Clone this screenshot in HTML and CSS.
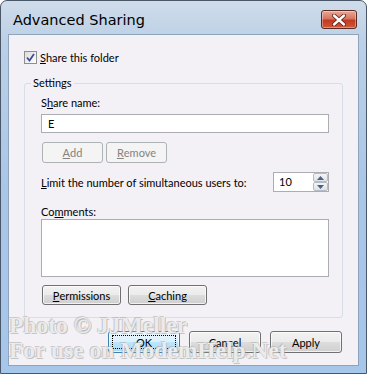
FILE: index.html
```html
<!DOCTYPE html>
<html>
<head>
<meta charset="utf-8">
<link rel="stylesheet" href="styles.css">
</head>
<body>
<div class="window">
  <div class="titlebar">
    <span class="title">Advanced Sharing</span>
    <div class="close">
      <svg width="16" height="12" viewBox="0 0 16 12"><path d="M3 1.5 L13 10.5 M13 1.5 L3 10.5" stroke="#5a1a10" stroke-width="4" stroke-linecap="round"/><path d="M3 1.5 L13 10.5 M13 1.5 L3 10.5" stroke="#ffffff" stroke-width="2.4" stroke-linecap="round"/></svg>
    </div>
  </div>
  <div class="client">
    <label class="check-row">
      <span class="checkbox">
        <svg width="9" height="9" viewBox="0 0 9 9"><path d="M1 4.5 L3.5 7.5 L8 1" fill="none" stroke="#3c4e9a" stroke-width="1.8"/></svg>
      </span>
      <span><u>S</u>hare this folder</span>
    </label>
    <fieldset class="group">
      <legend>Settings</legend>
      <div class="label"><span>S<u>h</u>are name:</span></div>
      <div class="input">E</div>
      <div class="btn-row">
        <div class="btn disabled small"><u>A</u>dd</div>
        <div class="btn disabled small"><u>R</u>emove</div>
      </div>
      <div class="limit-row">
        <span><u>L</u>imit the number of simultaneous users to:</span>
        <div class="spinner">
          <span class="spin-val">10</span>
          <div class="spin-btns">
            <div class="spin-btn"><svg width="7" height="4" viewBox="0 0 7 4"><path d="M0 4 L3.5 0 L7 4Z" fill="#4d6185"/></svg></div>
            <div class="spin-btn"><svg width="7" height="4" viewBox="0 0 7 4"><path d="M0 0 L3.5 4 L7 0Z" fill="#4d6185"/></svg></div>
          </div>
        </div>
      </div>
      <div class="label comments-label">Co<u>m</u>ments:</div>
      <div class="textarea"></div>
      <div class="btn-row bottom-row">
        <div class="btn wide"><u>P</u>ermissions</div>
        <div class="btn wide"><u>C</u>aching</div>
      </div>
    </fieldset>
    <div class="footer">
      <div class="btn dlg default"><span class="focus">OK</span></div>
      <div class="btn dlg">Cancel</div>
      <div class="btn dlg">Apply</div>
    </div>
  </div>
  <div class="watermark">
    <div>Photo © JJMeller</div>
    <div>For use on ModemHelp.Net</div>
  </div>
</div>
</body>
</html>
```
FILE: styles.css
```css
html, body {
  margin: 0;
  padding: 0;
  background: #ffffff;
}
body {
  width: 367px;
  height: 374px;
  overflow: hidden;
  font-family: Lato, "Liberation Sans", Arial, sans-serif;
  font-size: 11px;
  color: #000;
}
.window {
  position: relative;
  box-sizing: border-box;
  width: 367px;
  height: 374px;
  border: 1px solid #4a5768;
  border-radius: 7px 7px 0 0;
  background: linear-gradient(to bottom, #cfdcea 0px, #bcd0e6 40px, #a9c6e6 200px, #a6c6ea 374px);
  padding: 0 7px 7px 7px;
  display: flex;
  flex-direction: column;
}
.titlebar {
  height: 33px;
  display: flex;
  align-items: flex-start;
  justify-content: space-between;
}
.title {
  font-family: "DejaVu Sans", sans-serif;
  font-size: 14.5px;
  margin-top: 11px;
  margin-left: 5px;
  color: #000;
}
.close {
  margin-top: 9px;
  margin-right: 2px;
  width: 36px;
  height: 19px;
  box-sizing: border-box;
  border: 1px solid #5b2a22;
  border-radius: 3px;
  background: linear-gradient(to bottom, #e9a99a 0%, #d7745f 45%, #c23a1f 55%, #cf5a3a 100%);
  display: flex;
  align-items: center;
  justify-content: center;
  box-shadow: inset 0 0 0 1px rgba(255,255,255,0.35);
}
.client {
  flex: 1;
  background: #f3f1f5;
  border: 1px solid #8ea4bd;
  display: flex;
  flex-direction: column;
}
.check-row {
  display: flex;
  align-items: center;
  gap: 3px;
  margin: 15px 0 0 15px;
  height: 14px;
}
.checkbox {
  width: 13px;
  height: 13px;
  box-sizing: border-box;
  border: 1px solid #8e8f8f;
  background: linear-gradient(135deg, #dcdcdc, #ffffff);
  display: flex;
  align-items: center;
  justify-content: center;
}
.group {
  margin: 12px 0 0 15px;
  width: 319px;
  height: 242px;
  box-sizing: border-box;
  border: 1px solid #d5dfe5;
  border-radius: 3px;
  padding: 0 0 0 16px;
  display: flex;
  flex-direction: column;
}
.group legend {
  padding: 0 2px;
  margin-left: -10px;
  line-height: 14px;
}
.label {
  margin-top: 6px;
  height: 14px;
  line-height: 14px;
}
.input {
  margin-top: 4px;
  width: 288px;
  height: 19px;
  box-sizing: border-box;
  border: 1px solid #abadb3;
  background: #fff;
  padding-left: 6px;
  line-height: 17px;
}
.btn-row {
  display: flex;
  gap: 3px;
  margin-top: 9px;
  margin-left: 1px;
}
.btn {
  box-sizing: border-box;
  border: 1px solid #707070;
  border-radius: 3px;
  background: linear-gradient(to bottom, #f2f2f2 0%, #ebebeb 50%, #dddddd 51%, #cfcfcf 100%);
  display: flex;
  align-items: center;
  justify-content: center;
  height: 21px;
  box-shadow: inset 0 0 0 1px rgba(255,255,255,0.7);
}
.btn.disabled {
  background: #f4f4f4;
  border-color: #adb2b5;
  color: #838383;
  box-shadow: none;
}
.small {
  width: 61px;
}
.limit-row {
  display: flex;
  align-items: center;
  justify-content: space-between;
  width: 288px;
  margin-top: 9px;
}
.spinner {
  width: 56px;
  height: 20px;
  box-sizing: border-box;
  border: 1px solid #abadb3;
  background: #fff;
  display: flex;
  justify-content: space-between;
}
.spin-val {
  padding-left: 5px;
  line-height: 18px;
}
.spin-btns {
  width: 15px;
  display: flex;
  flex-direction: column;
}
.spin-btn {
  flex: 1;
  border: 1px solid #b6bcc6;
  border-radius: 2px;
  background: linear-gradient(to bottom, #f4f4f4, #dfe2e6);
  display: flex;
  align-items: center;
  justify-content: center;
}
.comments-label {
  margin-top: 13px;
}
.textarea {
  margin-top: 0;
  width: 288px;
  height: 58px;
  box-sizing: border-box;
  border: 1px solid #abadb3;
  background: #fff;
}
.bottom-row {
  margin-top: 8px;
  gap: 7px;
}
.wide {
  width: 79px;
  height: 20px;
}
.footer {
  display: flex;
  gap: 9px;
  margin: 13px 0 0 99px;
}
.dlg {
  width: 72px;
  height: 22px;
}
.default {
  border-color: #3c7fb1;
  background: linear-gradient(to bottom, #eaf6fd 0%, #d9f0fc 50%, #bee6fd 51%, #a7d9f5 100%);
}
.focus {
  flex: 1;
  align-self: stretch;
  margin: 3px;
  border: 1px dotted #000;
  display: flex;
  align-items: center;
  justify-content: center;
}
.watermark {
  position: absolute;
  left: 8px;
  top: 312px;
  font-family: "Liberation Serif", serif;
  font-weight: bold;
  font-size: 23.5px;
  line-height: 25px;
  color: rgba(255,255,255,0.75);
  text-shadow: 0 0 1px #b0b0b0, 1px 1px 0 rgba(170,170,170,0.6), -1px -1px 0 rgba(170,170,170,0.5);
  pointer-events: none;
  white-space: nowrap;
}
```
